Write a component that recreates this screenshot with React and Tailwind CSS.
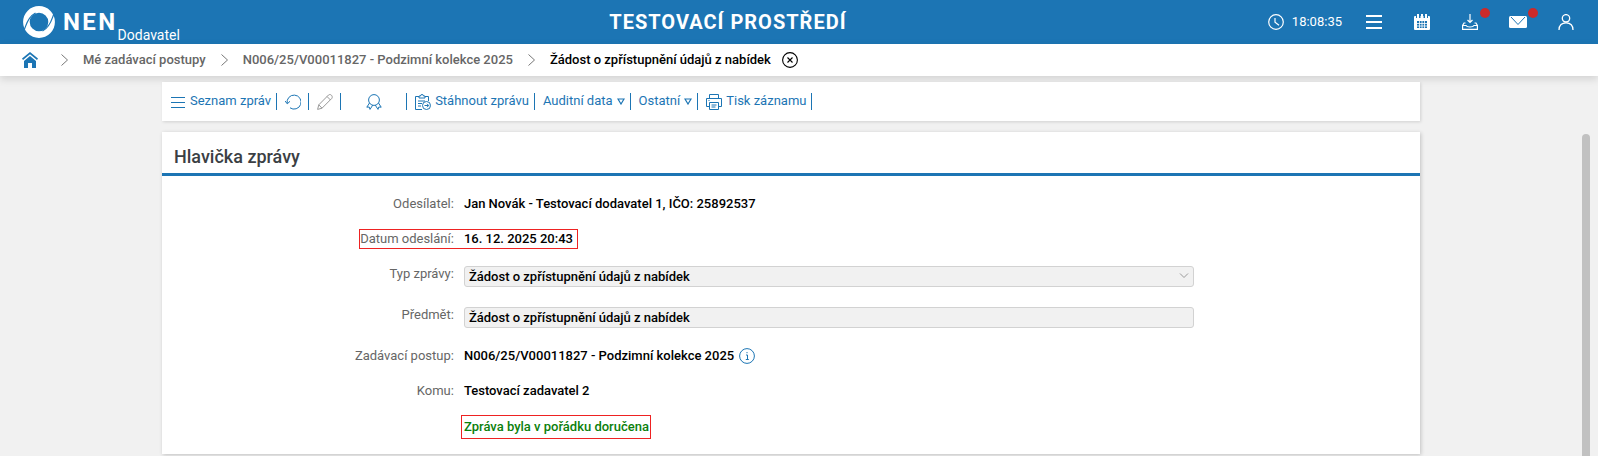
import { Fragment } from "react";

const request = "Žádost o zpřístupnění údajů z nabídek";

function Icon({ children, className = "size-4", ...props }) {
  return (
    <svg viewBox="0 0 16 16" fill="none" stroke="currentColor" className={`shrink-0 ${className}`} aria-hidden="true" {...props}>
      {children}
    </svg>
  );
}

function Logo() {
  return (
    <svg viewBox="0 0 32 32" className="size-8 shrink-0" fill="none" aria-hidden="true">
      <circle cx="16" cy="16" r="12.600" stroke="#fff" strokeWidth="6.600" />
      <path d="M.5 25C3 22 3 12 12.500 7M31.500 7C29 10 29 20 19.500 25" stroke="#1c75b4" strokeWidth="1.200" />
    </svg>
  );
}

function HeaderButton({ label, dot, children }) {
  return (
    <button type="button" aria-label={label} className="relative flex size-4 items-center justify-center">
      {children}
      {dot && <span className="absolute -top-1.5 left-[18px] size-2.5 rounded-full bg-[#cb2a2a]" />}
    </button>
  );
}

function Header() {
  return (
    <header className="flex h-11 items-center justify-between bg-[#1c75b4] pr-6 pl-[23px] text-white">
      <div className="flex h-full items-center">
        <Logo />
        <span className="ml-2 text-2xl font-bold tracking-widest">NEN</span>
        <span className="mb-px self-end text-sm leading-4">Dodavatel</span>
      </div>
      <h1 className="pl-2 text-xl font-bold tracking-wider">TESTOVACÍ PROSTŘEDÍ</h1>
      <div className="flex items-center gap-8">
        <div className="-mr-2 flex items-center gap-2 text-[13px]">
          <Icon strokeWidth="1.200">
            <circle cx="8" cy="8" r="7.300" />
            <path d="M7 4v4.300l4 3" />
          </Icon>
          <time>18:08:35</time>
        </div>
        <HeaderButton label="Menu">
          <Icon strokeWidth="2">
            <path d="M0 2h16M0 8h16M0 14h16" />
          </Icon>
        </HeaderButton>
        <HeaderButton label="Kalendář">
          <Icon stroke="none">
            <rect y="2" width="16" height="14" rx="1" fill="#fff" />
            <path d="M2 2h4v2H2zM6.500 2h3v2h-3zM10 2h4v2h-4z" fill="#1c75b4" />
            <path d="M3 0h2v4H3zM7 0h2v4H7zM11 0h2v4h-2z" fill="#fff" />
            <path d="M3 7h10v7H3z" fill="#1c75b4" />
            <path d="M5.500 7v7M8 7v7M10.500 7v7M3 9.500h10M3 12h10" stroke="#fff" strokeWidth=".8" />
          </Icon>
        </HeaderButton>
        <HeaderButton label="Stažené soubory" dot>
          <Icon strokeWidth="1.200">
            <path d="M8 0v8.500M5.500 6 8 8.500 10.500 6M3.500 9H2L.6 11.500v3.900h14.800v-3.900L14 9h-1.500M.6 11.500H4c1 2 7 2 8 0h3.400" />
          </Icon>
        </HeaderButton>
        <HeaderButton label="Zprávy" dot>
          <svg viewBox="0 0 18 12" className="h-3 w-[18px] shrink-0" aria-hidden="true">
            <rect width="18" height="12" rx="1.500" fill="#fff" />
            <path d="M2 1l7 7.500L16 1" fill="none" stroke="#1c75b4" />
          </svg>
        </HeaderButton>
        <HeaderButton label="Uživatel">
          <Icon strokeWidth="1.300">
            <circle cx="8" cy="4.300" r="3.700" />
            <path d="M1 16c0-5 3-7.200 7-7.200s7 2.200 7 7.200" />
          </Icon>
        </HeaderButton>
      </div>
    </header>
  );
}

function Chevron() {
  return (
    <svg viewBox="0 0 7 12" className="h-3 w-[7px] shrink-0" fill="none" stroke="#777" aria-hidden="true">
      <path d="M.5.5 6.500 6 .5 11.500" />
    </svg>
  );
}

function Breadcrumbs() {
  return (
    <nav className="z-10 flex h-8 items-center gap-[15px] bg-white pl-[22px] text-[13px] font-medium text-[#666] shadow-[0_3px_8px_#0002]">
      <a href="#" aria-label="Domů" className="mr-2 text-[#1c75b4]">
        <Icon stroke="none" fill="currentColor">
          <path d="M8 0 16 6.500 15 8 8 2.300 1 8 0 6.500zM8 4l6 5v7h-4v-5H6v5H2V9z" />
        </Icon>
      </a>
      <Chevron />
      <a href="#">Mé zadávací postupy</a>
      <Chevron />
      <a href="#">N006/25/V00011827 - Podzimní kolekce 2025</a>
      <Chevron />
      <span className="text-black">{request}</span>
      <button type="button" aria-label="Zavřít" className="-ml-1 text-black">
        <Icon strokeWidth="1.100">
          <circle cx="8" cy="8" r="7.400" />
          <path d="m5.500 5.500 5 5M10.500 5.500l-5 5" />
        </Icon>
      </button>
    </nav>
  );
}

function Triangle() {
  return (
    <svg viewBox="0 0 8 7" className="h-[7px] w-2 shrink-0" fill="none" stroke="currentColor" strokeWidth="1.200" aria-hidden="true">
      <path d="M1 1h6L4 6z" />
    </svg>
  );
}

const tools = [
  {
    text: "Seznam zpráv",
    icon: <Icon><path d="M1 3.500h14M1 8.500h14M1 13.500h14" /></Icon>,
  },
  {
    label: "Obnovit",
    icon: (
      <Icon>
        <path d="M2.200 9.500A7 7 0 1 1 5 13.800M0 7l2.300 2.800L5 7.300" />
      </Icon>
    ),
  },
  {
    label: "Upravit",
    icon: (
      <Icon className="size-4 text-[#999]">
        <path d="m.6 15.400 1.200-4.600L11.500 1c2-1.500 4.700 1 3.400 3.300L5 14.200zM1.800 10.800 5 14.200M10 2.500 13.500 6" />
      </Icon>
    ),
  },
  {
    label: "Podpis",
    wide: true,
    icon: (
      <Icon>
        <circle cx="8" cy="6" r="5.400" />
        <path d="M3.500 9 .8 13.200l2.400-.2.800 2.400 2.700-4.200M12.500 9l2.700 4.200-2.400-.2-.8 2.400-2.700-4.200" />
      </Icon>
    ),
  },
  {
    text: "Stáhnout zprávu",
    icon: (
      <Icon>
        <path d="M7 15.500H.5v-13H4M10 2.500h3.500V7M4 4V2h1.500a1.500 1.500 0 0 1 3 0H10v2zM3 7h7M3 9.500h4M3 12h3" />
        <circle cx="11.500" cy="11.500" r="4" />
        <path d="M9.500 11.500h4M12 9.800l1.700 1.700-1.700 1.700" />
      </Icon>
    ),
  },
  { text: "Auditní data", menu: true },
  { text: "Ostatní", menu: true },
  {
    text: "Tisk záznamu",
    icon: (
      <Icon>
        <path d="M3.500 4.500v-4h9v4M3 12.500H.5v-8h15v8H13M3.500 8.500h9v7h-9zM5.500 11h5M5.500 13h4M2.500 6.500h1" />
      </Icon>
    ),
  },
];

function ToolButton({ text, label, icon, menu, wide }) {
  const padding = wide ? "pr-6 pl-[25px]" : text ? "pr-[5px] pl-2" : "pr-[7px] pl-2";
  return (
    <button type="button" aria-label={label} className={`flex items-center gap-1 whitespace-nowrap ${padding}`}>
      {icon}
      {text && <span className="pb-0.5">{text}</span>}
      {menu && <Triangle />}
    </button>
  );
}

function Toolbar() {
  return (
    <div className="flex h-[39px] items-center bg-white text-[13px] text-[#1c75b4] shadow-[1px_1px_3px_#0002]">
      {tools.map((tool) => (
        <Fragment key={tool.text || tool.label}>
          <ToolButton {...tool} />
          <span className="h-[17px] w-px bg-[#1c75b4]" />
        </Fragment>
      ))}
    </div>
  );
}

const label = "w-[24%] shrink-0 pr-2.5 text-right text-[#666]";
const field = "block h-[21px] w-full appearance-none rounded-[3px] border border-[#d2d2d2] bg-[#f1f1f1] px-1 leading-[18px] font-medium text-black";

function Row({ name, children }) {
  return (
    <div className="flex">
      <dt className={label}>{name}</dt>
      <dd className="flex items-center gap-[5px] font-medium">{children}</dd>
    </div>
  );
}

function MessageCard() {
  return (
    <section className="bg-white shadow-[1px_1px_4px_#0003]">
      <h2 className="border-b-3 border-[#1c75b4] px-3 pt-3 pb-1 text-lg leading-[25px] font-medium text-[#3b3f44]">
        Hlavička zprávy
      </h2>
      <dl className="flex flex-col gap-[13px] pt-[17px] pb-[15px] text-[13px] leading-[22px]">
        <Row name="Odesílatel:">Jan Novák - Testovací dodavatel 1, IČO: 25892537</Row>
        <div className="flex">
          <dt className={label}>
            <span className="relative">
              Datum odeslání:
              {/* frame runs from the label over the date */}
              <span className="absolute -top-0.5 -left-px h-5 w-[219px] border border-[#e22]" />
            </span>
          </dt>
          <dd className="font-medium">16. 12. 2025 20:43</dd>
        </div>
        <div className="flex">
          <dt className={label}>
            <label htmlFor="type">Typ zprávy:</label>
          </dt>
          <dd className="relative w-[58%] pt-[3px] pb-1">
            <select id="type" className={field} defaultValue={request}>
              <option>{request}</option>
            </select>
            <svg viewBox="0 0 10 6" className="pointer-events-none absolute top-2.5 right-[5px] h-1.5 w-2.5" fill="none" stroke="#999">
              <path d="M1 .5l4 4 4-4" />
            </svg>
          </dd>
        </div>
        <div className="flex">
          <dt className={label}>
            <label htmlFor="subject">Předmět:</label>
          </dt>
          <dd className="w-[58%] pt-[3px] pb-1">
            <input id="subject" type="text" readOnly value={request} className={field} />
          </dd>
        </div>
        <Row name="Zadávací postup:">
          N006/25/V00011827 - Podzimní kolekce 2025
          <button type="button" aria-label="Informace" className="text-[#1c75b4]">
            <Icon>
              <circle cx="8" cy="8" r="7.400" />
              <path d="M7 7h1.500v4M6.800 11.500h3M8 4v1.200" />
            </Icon>
          </button>
        </Row>
        <Row name="Komu:">Testovací zadavatel 2</Row>
        <div className="flex">
          <dt className={label} />
          <dd className="-ml-[3px] border border-[#e22] pr-px pl-0.5 font-medium text-[#0b800b]">
            Zpráva byla v pořádku doručena
          </dd>
        </div>
      </dl>
    </section>
  );
}

export default function App() {
  return (
    <div className="flex min-h-screen flex-col bg-[#f1f1f1] font-[Roboto,sans-serif] text-black">
      <Header />
      <Breadcrumbs />
      <div className="flex flex-1">
        <main className="z-20 min-w-0 flex-1 pt-1.5 pb-0.5">
          <div className="mx-auto flex w-full max-w-[1258px] flex-col gap-[11px]">
            <Toolbar />
            <MessageCard />
          </div>
        </main>
        <div className="mt-[58px] mr-2 w-2 rounded-t-full bg-[#c1c1c1]" />
      </div>
    </div>
  );
}
